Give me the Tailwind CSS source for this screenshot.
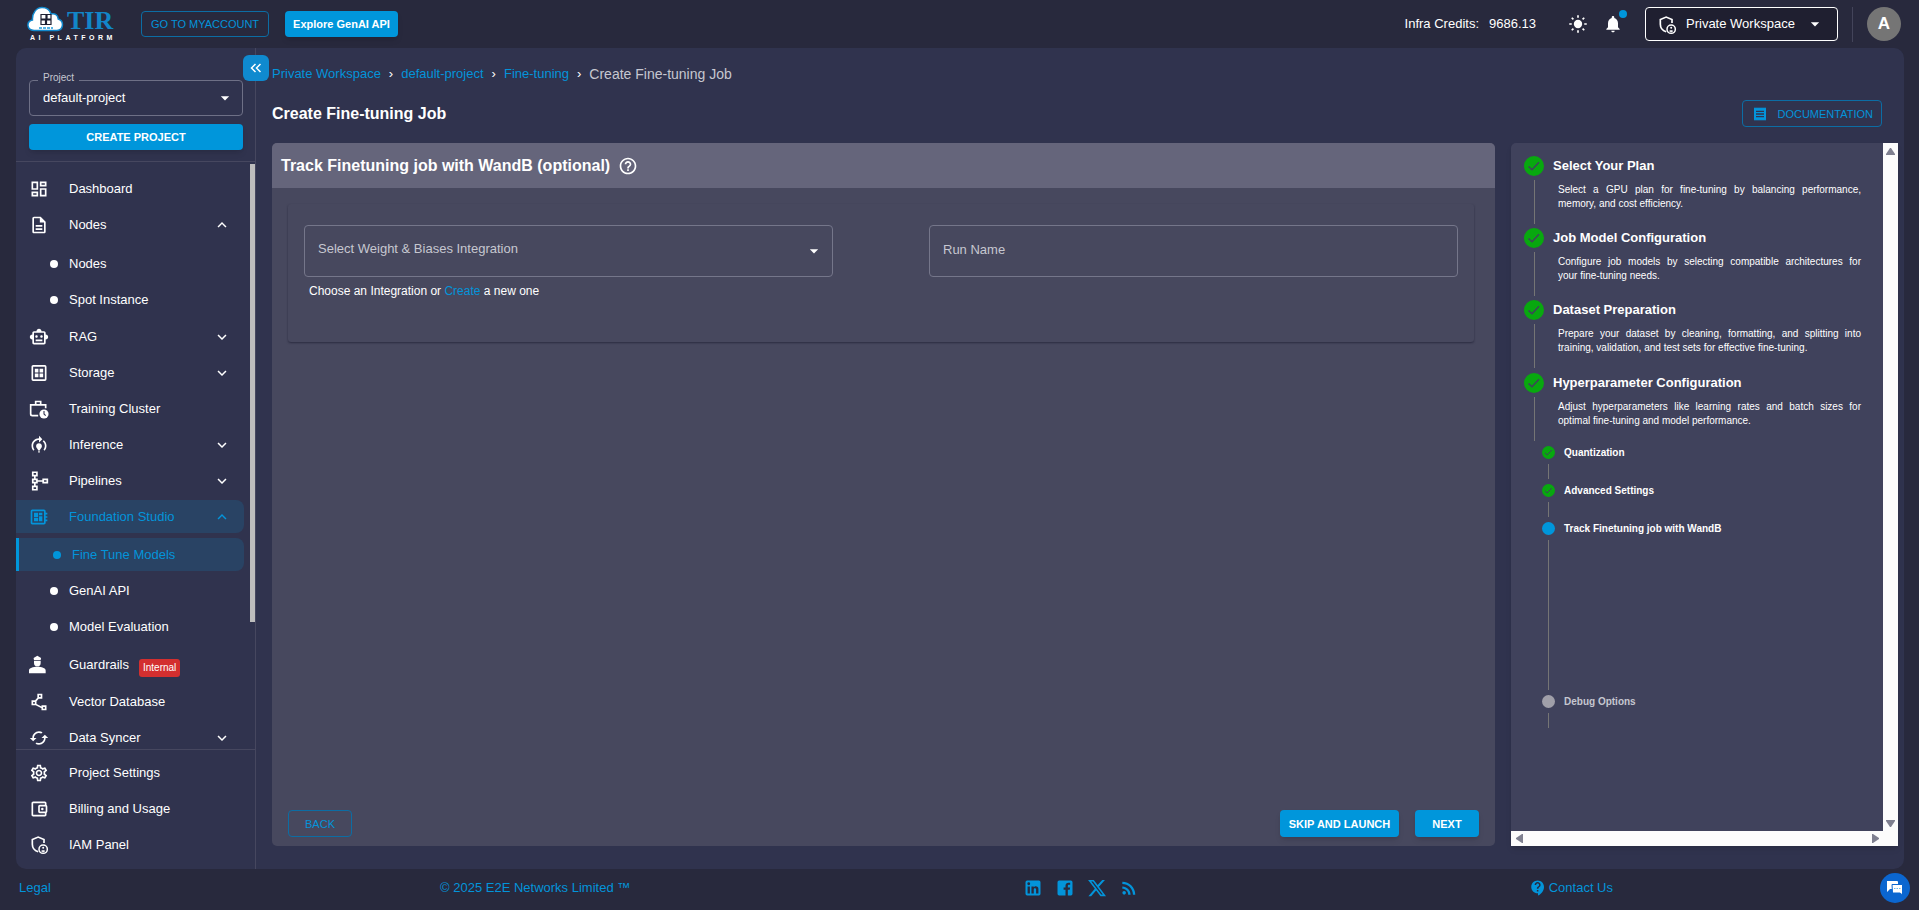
<!DOCTYPE html>
<html lang="en">
<head>
    <meta charset="UTF-8">
    <meta name="viewport" content="width=device-width, initial-scale=1.0">
    <title>TIR AI Platform - Create Fine-tuning Job</title>
    <script src="https://cdn.jsdelivr.net/npm/@tailwindcss/browser@4"></script>
</head>
<body class="h-screen flex flex-col overflow-hidden bg-[#28293d] text-white text-[13px] leading-5 font-['Liberation_Sans',Arial,sans-serif]">

    <!-- Icon set -->
    <svg class="hidden">
        <symbol id="dashboard" viewBox="0 0 24 24"><path d="M19 5v2h-4V5h4M9 5v6H5V5h4m10 8v6h-4v-6h4M9 17v2H5v-2h4M21 3h-8v6h8V3zM11 3H3v10h8V3zm10 8h-8v10h8V11zm-10 4H3v6h8v-6z"/></symbol>
        <symbol id="file" viewBox="0 0 24 24"><path d="M8 16h8v2H8zm0-4h8v2H8zm6-10H6c-1.1 0-2 .9-2 2v16c0 1.1.89 2 1.99 2H18c1.1 0 2-.9 2-2V8l-6-6zm4 18H6V4h7v5h5v11z"/></symbol>
        <symbol id="robot" viewBox="0 0 24 24"><path d="M20 9V7c0-1.1-.9-2-2-2h-3c0-1.66-1.34-3-3-3S9 3.34 9 5H6c-1.1 0-2 .9-2 2v2c-1.66 0-3 1.34-3 3s1.34 3 3 3v4c0 1.1.9 2 2 2h12c1.1 0 2-.9 2-2v-4c1.66 0 3-1.34 3-3s-1.34-3-3-3zm-2 10H6V7h12v12zm-9-6c-.83 0-1.5-.67-1.5-1.5S8.17 10 9 10s1.5.67 1.5 1.5S9.83 13 9 13zm7.500-1.500c0 .83-.67 1.500-1.500 1.500s-1.500-.67-1.500-1.500.67-1.500 1.500-1.500 1.500.67 1.500 1.500zM8 15h8v2H8v-2z"/></symbol>
        <symbol id="storage" viewBox="0 0 24 24"><path fill-rule="evenodd" d="M5 2.500h14a2 2 0 0 1 2 2v15a2 2 0 0 1-2 2H5a2 2 0 0 1-2-2v-15c0-1.100.9-2 2-2zm0 2v15h14v-15H5z"/><path d="M7 7h4.300v4.300H7zM12.700 7H17v4.300h-4.300zM7 12.700h4.300V17H7zM12.700 12.700H17V17h-4.300z"/></symbol>
        <symbol id="work" viewBox="0 0 24 24"><path fill="none" stroke="currentColor" stroke-width="2" d="M11 20H4a2 2 0 0 1-2-2V7h18v4M8 7V3h6v4"/><circle cx="18" cy="18" r="5.500"/><path fill="none" stroke="#30334e" stroke-width="1.300" d="M18 14.500V18l2 2"/></symbol>
        <symbol id="model" viewBox="0 0 24 24"><path d="M15.500 13.500c0 2-2.500 3.500-2.500 5h-2c0-1.500-2.500-3-2.500-5 0-1.930 1.570-3.500 3.500-3.500s3.500 1.570 3.500 3.500zm-2.500 6h-2V21h2v-1.500zm6-6.500c0 1.680-.59 3.210-1.580 4.420l1.420 1.420C20.180 17.270 21 15.230 21 13c0-2.740-1.230-5.190-3.160-6.840l-1.420 1.420C17.990 8.860 19 10.820 19 13zm-3-8-4-4v3c-4.970 0-9 4.030-9 9 0 2.230.82 4.270 2.160 5.840l1.420-1.420C5.590 16.210 5 14.680 5 13c0-3.860 3.140-7 7-7v3l4-4z"/></symbol>
        <symbol id="pipeline" viewBox="0 0 24 24"><path fill="none" stroke="currentColor" stroke-width="2" d="M4.500 1.500h5v4h-5zM4.500 10h5v4h-5zM4.500 18.500h5v4h-5zM17 10h5v4h-5zM7 5.500V10M7 14v4.500M9.500 12H17"/></symbol>
        <symbol id="board" viewBox="0 0 24 24"><path d="M22 9V7h-2V5c0-1.100-.9-2-2-2H4c-1.100 0-2 .9-2 2v14c0 1.100.9 2 2 2h14c1.100 0 2-.9 2-2v-2h2v-2h-2v-2h2v-2h-2V9h2zm-4 10H4V5h14v14zM6 13h5v4H6zm6-6h4v3h-4zM6 7h5v5H6zm6 4h4v6h-4z"/></symbol>
        <symbol id="guard" viewBox="0 0 24 24"><path d="M5.500 3.500 10 1l4.500 2.500L14 6H6zM6 7h8v2.500a4 4 0 0 1-8 0zM0 22v-3.500C0 15.500 5 14 10 14s10 1.500 10 4.500V22z"/></symbol>
        <symbol id="polyline" viewBox="0 0 24 24"><path d="M15 16v1.260l-6-3v-3.170L11.700 8H16V2h-6v4.900L7.300 10H3v6h5l7 3.500V22h6v-6h-6zM12 4h2v2h-2V4zM7 14H5v-2h2v2zm12 6h-2v-2h2v2z"/></symbol>
        <symbol id="sync" viewBox="0 0 24 24"><path d="M19 8l-4 4h3c0 3.310-2.690 6-6 6-1.010 0-1.970-.25-2.800-.7l-1.460 1.460C8.970 19.540 10.430 20 12 20c4.420 0 8-3.580 8-8h3l-4-4zM6 12c0-3.310 2.690-6 6-6 1.010 0 1.970.25 2.800.7l1.460-1.460C15.030 4.460 13.570 4 12 4c-4.420 0-8 3.580-8 8H1l4 4 4-4H6z"/></symbol>
        <symbol id="gear" viewBox="0 0 24 24"><path d="M19.430 12.980c.04-.32.07-.64.07-.98 0-.34-.03-.66-.07-.98l2.110-1.650c.19-.15.24-.42.12-.64l-2-3.460c-.09-.16-.26-.25-.44-.25-.06 0-.12.01-.17.03l-2.490 1c-.52-.4-1.080-.73-1.690-.98l-.38-2.650C14.460 2.180 14.250 2 14 2h-4c-.25 0-.46.18-.49.42l-.38 2.650c-.61.25-1.170.59-1.690.98l-2.490-1c-.06-.02-.12-.03-.18-.03-.17 0-.34.09-.43.25l-2 3.460c-.13.22-.07.49.12.64l2.110 1.650c-.04.32-.07.65-.07.98 0 .33.03.66.07.98l-2.110 1.650c-.19.15-.24.42-.12.64l2 3.460c.09.16.26.25.44.25.06 0 .12-.01.17-.03l2.490-1c.52.4 1.080.73 1.690.98l.38 2.650c.03.24.24.42.49.42h4c.25 0 .46-.18.49-.42l.38-2.650c.61-.25 1.170-.59 1.690-.98l2.490 1c.06.02.12.03.18.03.17 0 .34-.09.43-.25l2-3.460c.12-.22.07-.49-.12-.64l-2.110-1.650zm-1.980-1.710c.04.31.05.52.05.73 0 .21-.02.43-.05.73l-.14 1.130.89.7 1.080.84-.7 1.210-1.270-.51-1.040-.42-.9.68c-.43.32-.84.56-1.250.73l-1.060.43-.16 1.130-.2 1.350h-1.400l-.19-1.350-.16-1.130-1.060-.43c-.43-.18-.83-.41-1.230-.71l-.91-.7-1.060.43-1.270.51-.7-1.210 1.080-.84.89-.7-.14-1.130c-.03-.31-.05-.54-.05-.74s.02-.43.05-.73l.14-1.130-.89-.7-1.080-.84.7-1.210 1.270.51 1.040.42.9-.68c.43-.32.84-.56 1.250-.73l1.060-.43.16-1.130.2-1.350h1.390l.19 1.350.16 1.130 1.060.43c.43.18.83.41 1.230.71l.91.7 1.060-.43 1.270-.51.7 1.210-1.070.85-.89.7.14 1.130zM12 8c-2.210 0-4 1.790-4 4s1.790 4 4 4 4-1.790 4-4-1.790-4-4-4zm0 6c-1.100 0-2-.9-2-2s.9-2 2-2 2 .9 2 2-.9 2-2 2z"/></symbol>
        <symbol id="wallet" viewBox="0 0 24 24"><path d="M21 7.280V5c0-1.100-.9-2-2-2H5c-1.110 0-2 .9-2 2v14c0 1.100.89 2 2 2h14c1.100 0 2-.9 2-2v-2.280c.59-.35 1-.98 1-1.720V9c0-.74-.41-1.370-1-1.720zM20 9v6h-7V9h7zM5 19V5h14v2h-6c-1.100 0-2 .9-2 2v6c0 1.100.9 2 2 2h6v2H5z"/><circle cx="16" cy="12" r="1.500"/></symbol>
        <symbol id="shield" viewBox="0 0 24 24"><path fill="none" stroke="currentColor" stroke-width="2" d="M18 9.500V5.500L11 2.500 4 5.500V11c0 4 2.500 7.500 7 9"/><circle cx="17" cy="17" r="5" fill="none" stroke="currentColor" stroke-width="1.800"/><circle cx="17" cy="15.300" r="1.200"/><path d="M14.500 19.300c.5-1.400 4.500-1.400 5 0-1 1.500-4 1.500-5 0z"/></symbol>
        <symbol id="down" viewBox="0 0 24 24"><path d="M16.590 8.590 12 13.170 7.410 8.590 6 10l6 6 6-6z"/></symbol>
        <symbol id="up" viewBox="0 0 24 24"><path d="m12 8-6 6 1.410 1.410L12 10.830l4.590 4.580L18 14z"/></symbol>
        <symbol id="caret" viewBox="0 0 24 24"><path d="m7 10 5 5 5-5z"/></symbol>
        <symbol id="check" viewBox="0 0 20 20"><circle cx="10" cy="10" r="10" fill="#08a80f"/><path fill="none" stroke="#40425c" stroke-width="1.500" d="m4.500 10.500 3.500 3.200 7-7.400"/></symbol>
    </svg>

    <!-- Header -->
    <header class="h-12 shrink-0 flex items-center justify-between pl-[27px] pr-[18px]">
        <div class="flex items-center">
            <a href="#" aria-label="TIR AI Platform" class="mr-6">
                <svg class="w-[90px] h-9 block" viewBox="0 0 90 36">
                    <path fill="#fff" stroke="#1288cc" stroke-width="1.500" d="M7 24.500c-7.500-.5-8-9-1.500-10.500C5 7 9.500 1.500 15 1.500c5 0 8 3 9 6.500 4-1 7 1 7.200 5 6.300 2 5.300 11-1.200 11.500z"/>
                    <path fill="none" stroke="#1e2133" stroke-width="1.200" d="M14 8.500h5v4.500h-5zm6 0h4v4.500h-4zM14 14h4.500v4.500H14zm5.500 0H24v4.500h-4.500z"/>
                    <path stroke="#58b4e4" stroke-width="2" stroke-dasharray="3 1" d="M12 22h14"/>
                    <text x="40" y="23" font-size="26" font-weight="700" fill="#1286c8" font-family="Liberation Serif, serif">TIR</text>
                    <text x="3" y="34" font-size="7" font-weight="700" fill="#fff" letter-spacing="3.500" font-family="Liberation Sans, sans-serif">AI PLATFORM</text>
                </svg>
            </a>
            <button class="h-[26px] px-2 rounded border border-[#0c6da4] text-[#0394da] text-[11px] w-32 whitespace-nowrap">GO TO MYACCOUNT</button>
            <button class="h-[26px] w-[113px] ml-4 rounded bg-[#0096db] text-[11px] font-bold whitespace-nowrap shadow-md">Explore GenAI API</button>
        </div>
        <div class="flex items-center">
            <span>Infra Credits:</span>
            <span class="ml-[10px]">9686.13</span>
            <button aria-label="Toggle theme" class="ml-8">
                <svg class="size-5 block" viewBox="0 0 24 24" fill="currentColor"><circle cx="12" cy="12" r="5"/><path stroke="currentColor" stroke-width="2" d="M12 1.500v3M12 19.500v3M1.500 12h3M19.500 12h3M4.500 4.500l2 2M17.500 17.500l2 2M4.500 19.500l2-2M17.500 6.500l2-2"/></svg>
            </button>
            <button aria-label="Notifications" class="relative ml-[15px]">
                <svg class="size-5 block" viewBox="0 0 24 24" fill="currentColor"><path d="M12 22c1.100 0 2-.9 2-2h-4c0 1.100.89 2 2 2zm6-6v-5c0-3.070-1.640-5.640-4.500-6.320V4c0-.83-.67-1.500-1.500-1.500s-1.500.67-1.500 1.500v.68C7.630 5.360 6 7.920 6 11v5l-2 2v1h16v-1l-2-2z"/></svg>
                <span class="absolute -top-1 left-4 size-2 rounded-full bg-[#0096db]"></span>
            </button>
            <div class="relative ml-[22px]">
                <svg class="absolute left-3 top-2 size-5 pointer-events-none" fill="currentColor"><use href="#shield"/></svg>
                <select aria-label="Workspace" class="appearance-none w-[193px] h-[34px] pl-10 rounded border border-white bg-[#1f1f30]">
                    <option>Private Workspace</option>
                </select>
                <svg class="absolute right-[13px] top-[7px] size-5 pointer-events-none" fill="currentColor"><use href="#caret"/></svg>
            </div>
            <div class="w-px h-[35px] ml-[14px] bg-[#43445a]"></div>
            <button aria-label="Account" class="ml-[14px] size-[34px] rounded-full bg-[#757575] text-[17px] font-bold">A</button>
        </div>
    </header>

    <!-- Shell -->
    <div class="flex-1 min-h-0 ml-4 mr-[15px] flex rounded-[10px] bg-[#30334e]">

        <!-- Sidebar -->
        <aside class="relative w-60 shrink-0 flex flex-col border-r border-[#46475f]">
            <button aria-label="Collapse sidebar" class="absolute top-[7px] -right-[14px] size-[26px] rounded-md bg-[#0f8acf] flex items-center justify-center">
                <svg class="w-3 h-3" viewBox="0 0 12 12" fill="none" stroke="currentColor" stroke-width="1.500"><path d="M5.500 2 1.500 6l4 4M10.500 2l-4 4 4 4"/></svg>
            </button>
            <div class="pt-8 pb-[11px] pl-[13px] pr-3 border-b border-[#46475f]">
                <div class="relative">
                    <label for="project" class="absolute left-[9px] -top-2 px-[5px] text-[10px] leading-3 bg-[#30334e] text-[#c6c7d0]">Project</label>
                    <select id="project" class="appearance-none w-full h-9 pl-[13px] rounded border border-[#6e7086]">
                        <option>default-project</option>
                    </select>
                    <svg class="absolute right-2 top-2 size-5 pointer-events-none" fill="currentColor"><use href="#caret"/></svg>
                </div>
                <button class="mt-2 w-full h-[26px] rounded bg-[#0096db] text-[11px] font-bold shadow-md">CREATE PROJECT</button>
            </div>

            <div class="flex-1 min-h-0 flex overflow-hidden">
                <nav class="flex-1 pt-[10px] pr-[6px] flex flex-col gap-[3px] shrink-0">
                    <a href="#" class="flex items-center h-[33px] shrink-0 pl-[13px] pr-[13px]"><svg class="size-5" fill="currentColor"><use href="#dashboard"/></svg><span class="ml-5">Dashboard</span></a>
                    <a href="#" class="flex items-center h-[33px] shrink-0 pl-[13px] pr-[13px]"><svg class="size-5" fill="currentColor"><use href="#file"/></svg><span class="ml-5 flex-1">Nodes</span><svg class="size-[18px]" fill="currentColor"><use href="#up"/></svg></a>
                    <div class="pt-[3px] pb-px flex flex-col gap-[3px]">
                        <a href="#" class="flex items-center h-[33px] pl-[34px]"><span class="size-2 rounded-full bg-white"></span><span class="ml-[11px]">Nodes</span></a>
                        <a href="#" class="flex items-center h-[33px] pl-[34px]"><span class="size-2 rounded-full bg-white"></span><span class="ml-[11px]">Spot Instance</span></a>
                    </div>
                    <a href="#" class="flex items-center h-[33px] shrink-0 pl-[13px] pr-[13px]"><svg class="size-5" fill="currentColor"><use href="#robot"/></svg><span class="ml-5 flex-1">RAG</span><svg class="size-[18px]" fill="currentColor"><use href="#down"/></svg></a>
                    <a href="#" class="flex items-center h-[33px] shrink-0 pl-[13px] pr-[13px]"><svg class="size-5" fill="currentColor"><use href="#storage"/></svg><span class="ml-5 flex-1">Storage</span><svg class="size-[18px]" fill="currentColor"><use href="#down"/></svg></a>
                    <a href="#" class="flex items-center h-[33px] shrink-0 pl-[13px] pr-[13px]"><svg class="size-5" fill="currentColor"><use href="#work"/></svg><span class="ml-5">Training Cluster</span></a>
                    <a href="#" class="flex items-center h-[33px] shrink-0 pl-[13px] pr-[13px]"><svg class="size-5" fill="currentColor"><use href="#model"/></svg><span class="ml-5 flex-1">Inference</span><svg class="size-[18px]" fill="currentColor"><use href="#down"/></svg></a>
                    <a href="#" class="flex items-center h-[33px] shrink-0 pl-[13px] pr-[13px]"><svg class="size-5" fill="currentColor"><use href="#pipeline"/></svg><span class="ml-5 flex-1">Pipelines</span><svg class="size-[18px]" fill="currentColor"><use href="#down"/></svg></a>
                    <a href="#" class="flex items-center h-[33px] shrink-0 pl-[13px] pr-[13px] rounded-r-lg bg-[#294364] text-[#0394da]"><svg class="size-5" fill="currentColor"><use href="#board"/></svg><span class="ml-5 flex-1">Foundation Studio</span><svg class="size-[18px]" fill="currentColor"><use href="#up"/></svg></a>
                    <div class="pt-[2px] pb-[2px] flex flex-col gap-[3px]">
                        <a href="#" class="flex items-center h-[33px] pl-[34px] border-l-3 border-[#0096db] rounded-r-lg bg-[#294364] text-[#0394da]"><span class="size-2 rounded-full bg-[#0096db]"></span><span class="ml-[11px]">Fine Tune Models</span></a>
                        <a href="#" class="flex items-center h-[33px] pl-[34px]"><span class="size-2 rounded-full bg-white"></span><span class="ml-[11px]">GenAI API</span></a>
                        <a href="#" class="flex items-center h-[33px] pl-[34px]"><span class="size-2 rounded-full bg-white"></span><span class="ml-[11px]">Model Evaluation</span></a>
                    </div>
                    <a href="#" class="flex items-center h-[34px] shrink-0 pl-[13px] pr-[13px]"><svg class="size-5" fill="currentColor"><use href="#guard"/></svg><span class="ml-5">Guardrails</span><span class="ml-[10px] mt-[6px] px-1 h-[18px] leading-[18px] rounded-[3px] bg-[#d32f2f] text-[10px]">Internal</span></a>
                    <a href="#" class="flex items-center h-[33px] shrink-0 pl-[13px] pr-[13px]"><svg class="size-5" fill="currentColor"><use href="#polyline"/></svg><span class="ml-5">Vector Database</span></a>
                    <a href="#" class="flex items-center h-[33px] shrink-0 pl-[13px] pr-[13px]"><svg class="size-5" fill="currentColor"><use href="#sync"/></svg><span class="ml-5 flex-1">Data Syncer</span><svg class="size-[18px]" fill="currentColor"><use href="#down"/></svg></a>
                </nav>
                <!-- Scrollbar thumb -->
                <div class="w-[6px] -mr-px mt-[2px] h-[78%] bg-[#bdbdbd]"></div>
            </div>

            <nav class="h-[120px] shrink-0 pt-[6px] flex flex-col gap-[3px] border-t border-[#46475f]">
                <a href="#" class="flex items-center h-[33px] pl-[13px]"><svg class="size-5" fill="currentColor"><use href="#gear"/></svg><span class="ml-5">Project Settings</span></a>
                <a href="#" class="flex items-center h-[33px] pl-[13px]"><svg class="size-5" fill="currentColor"><use href="#wallet"/></svg><span class="ml-5">Billing and Usage</span></a>
                <a href="#" class="flex items-center h-[33px] pl-[13px]"><svg class="size-5" fill="currentColor"><use href="#shield"/></svg><span class="ml-5">IAM Panel</span></a>
            </nav>
        </aside>

        <!-- Content -->
        <main class="flex-1 min-w-0 flex flex-col pt-4 pb-[23px] pl-4 pr-[6px]">
            <nav aria-label="Breadcrumb" class="flex gap-2 text-[#0394da]">
                <a href="#">Private Workspace</a>
                <span class="text-white">›</span>
                <a href="#">default-project</a>
                <span class="text-white">›</span>
                <a href="#">Fine-tuning</a>
                <span class="text-white">›</span>
                <span class="text-sm text-[#c6c7d0]">Create Fine-tuning Job</span>
            </nav>
            <div class="mt-4 mb-4 pr-4 flex items-center justify-between">
                <h1 class="text-base font-bold">Create Fine-tuning Job</h1>
                <a href="#" class="flex items-center h-[27px] px-2 rounded border border-[#0c6da4] text-[#0394da] text-[11px]">
                    <svg class="w-[18px] h-4 mr-2" viewBox="0 0 24 24" fill="currentColor"><path d="M18 17H6v-2h12v2zm0-4H6v-2h12v2zm0-4H6V7h12v2zM3 22l1.500-1.500L6 22l1.500-1.500L9 22l1.500-1.500L12 22l1.500-1.500L15 22l1.500-1.500L18 22l1.500-1.500L21 22V2l-1.500 1.500L18 2l-1.500 1.500L15 2l-1.500 1.500L12 2l-1.500 1.500L9 2 7.500 3.500 6 2 4.500 3.500 3 2v20z"/></svg>
                    DOCUMENTATION
                </a>
            </div>

            <div class="flex-1 min-h-0 flex gap-4">
                <section class="flex-1 min-w-0 flex flex-col rounded-[5px] bg-[#47485e] overflow-hidden">
                    <div class="h-[45px] shrink-0 flex items-center pl-[9px] bg-[#65657b]">
                        <h2 class="text-base font-bold">Track Finetuning job with WandB (optional)</h2>
                        <svg class="ml-2 size-5" viewBox="0 0 24 24" fill="currentColor"><path d="M11 18h2v-2h-2v2zm1-16C6.480 2 2 6.480 2 12s4.480 10 10 10 10-4.480 10-10S17.520 2 12 2zm0 18c-4.410 0-8-3.590-8-8s3.590-8 8-8 8 3.590 8 8-3.590 8-8 8zm0-14c-2.210 0-4 1.790-4 4h2c0-1.100.9-2 2-2s2 .9 2 2c0 2-3 1.750-3 5h2c0-2.250 3-2.500 3-5 0-2.210-1.790-4-4-4z"/></svg>
                    </div>
                    <form class="flex-1 flex flex-col justify-between pt-4 pb-[9px] px-4">
                        <div class="mr-[5px] h-[138px] px-4 pt-[21px] grid grid-cols-2 gap-24 rounded-[3px] shadow-[0_1px_2px_rgba(20,20,40,0.55)]">
                            <div>
                                <div class="relative">
                                    <select aria-label="Select Weight &amp; Biases Integration" class="appearance-none w-full h-[52px] pl-[13px] pb-1 rounded border border-[#75768a] text-[#c6c7d0]">
                                        <option>Select Weight &amp; Biases Integration</option>
                                    </select>
                                    <svg class="absolute right-[9px] top-4 size-5 pointer-events-none" fill="currentColor"><use href="#caret"/></svg>
                                </div>
                                <p class="mt-1 ml-[5px] text-xs leading-5">Choose an Integration or <a href="#" class="text-[#0394da]">Create</a> a new one</p>
                            </div>
                            <input type="text" aria-label="Run Name" placeholder="Run Name" class="h-[52px] px-[13px] pb-1 rounded border border-[#75768a] placeholder:text-[#c6c7d0]">
                        </div>
                        <div class="flex items-center">
                            <button type="button" class="w-16 h-[27px] rounded border border-[#0c6da4] text-[#0394da] text-[11px]">BACK</button>
                            <button type="button" class="ml-auto w-[119px] h-[27px] rounded bg-[#0096db] text-[11px] font-bold shadow-md">SKIP AND LAUNCH</button>
                            <button type="button" class="ml-4 w-16 h-[27px] rounded bg-[#0096db] text-[11px] font-bold shadow-md">NEXT</button>
                        </div>
                    </form>
                </section>

                <!-- Stepper -->
                <section class="w-[387px] shrink-0 grid grid-cols-[1fr_15px] grid-rows-[1fr_15px] rounded-tl-[5px] bg-[#40425c] shadow-md">
                    <ol class="pt-[13px] pl-[13px] pr-[22px] min-h-0 overflow-hidden">
                        <li class="flex h-[72px]">
                            <div class="w-5 shrink-0 flex flex-col items-center"><svg class="size-5"><use href="#check"/></svg><span class="mt-1 w-px h-11 bg-[#757575]"></span></div>
                            <div class="flex-1 ml-[9px]">
                                <h3 class="font-bold">Select Your Plan</h3>
                                <p class="mt-[7px] ml-[5px] text-[10px] leading-[14px] text-justify">Select a GPU plan for fine-tuning by balancing performance, memory, and cost efficiency.</p>
                            </div>
                        </li>
                        <li class="flex h-[72px]">
                            <div class="w-5 shrink-0 flex flex-col items-center"><svg class="size-5"><use href="#check"/></svg><span class="mt-1 w-px h-11 bg-[#757575]"></span></div>
                            <div class="flex-1 ml-[9px]">
                                <h3 class="font-bold">Job Model Configuration</h3>
                                <p class="mt-[7px] ml-[5px] text-[10px] leading-[14px] text-justify">Configure job models by selecting compatible architectures for your&nbsp;fine-tuning needs.</p>
                            </div>
                        </li>
                        <li class="flex h-[73px]">
                            <div class="w-5 shrink-0 flex flex-col items-center"><svg class="size-5"><use href="#check"/></svg><span class="mt-1 w-px h-11 bg-[#757575]"></span></div>
                            <div class="flex-1 ml-[9px]">
                                <h3 class="font-bold">Dataset Preparation</h3>
                                <p class="mt-[7px] ml-[5px] text-[10px] leading-[14px] text-justify">Prepare your dataset by cleaning, formatting, and splitting into training, validation, and test sets for effective fine-tuning.</p>
                            </div>
                        </li>
                        <li class="flex h-[73px]">
                            <div class="w-5 shrink-0 flex flex-col items-center"><svg class="size-5"><use href="#check"/></svg><span class="mt-1 w-px h-11 bg-[#757575]"></span></div>
                            <div class="flex-1 ml-[9px]">
                                <h3 class="font-bold">Hyperparameter Configuration</h3>
                                <p class="mt-[7px] ml-[5px] text-[10px] leading-[14px] text-justify">Adjust hyperparameters like learning rates and batch sizes for optimal fine-tuning and model performance.</p>
                            </div>
                        </li>
                        <li>
                            <ol class="ml-[18px] text-[10px] leading-[13px] font-bold">
                                <li class="flex h-[38px]">
                                    <div class="w-[13px] flex flex-col items-center"><svg class="size-[13px]"><use href="#check"/></svg><span class="mt-[5px] w-px h-[15px] bg-[#757575]"></span></div>
                                    <span class="ml-[9px]">Quantization</span>
                                </li>
                                <li class="flex h-[38px]">
                                    <div class="w-[13px] flex flex-col items-center"><svg class="size-[13px]"><use href="#check"/></svg><span class="mt-[5px] w-px h-[15px] bg-[#757575]"></span></div>
                                    <span class="ml-[9px]">Advanced Settings</span>
                                </li>
                                <li class="flex h-[173px]">
                                    <div class="w-[13px] flex flex-col items-center"><span class="size-[13px] rounded-full bg-[#0096db]"></span><span class="mt-[5px] w-px h-[150px] bg-[#757575]"></span></div>
                                    <span class="ml-[9px]">Track Finetuning job with WandB</span>
                                </li>
                                <li class="flex h-[38px] text-[#c6c7d0]">
                                    <div class="w-[13px] flex flex-col items-center"><span class="size-[13px] rounded-full bg-[#a09fa9]"></span><span class="mt-[5px] w-px h-[15px] bg-[#757575]"></span></div>
                                    <span class="ml-[9px]">Debug Options</span>
                                </li>
                            </ol>
                        </li>
                    </ol>
                    <!-- Scrollbars -->
                    <div class="row-span-2 bg-[#fcfcfc] flex flex-col items-center justify-between pt-[5px] pb-[19px]">
                        <svg class="w-[9px] h-[7px]" viewBox="0 0 9 7" fill="#7f8090"><path d="M4 0h1l4 6v1H0V6z"/></svg>
                        <svg class="w-[9px] h-[7px]" viewBox="0 0 9 7" fill="#7f8090"><path d="M4 7h1l4-6V0H0v1z"/></svg>
                    </div>
                    <div class="bg-[#fcfcfc] flex items-center justify-between pl-[5px] pr-1">
                        <svg class="w-[7px] h-[9px]" viewBox="0 0 7 9" fill="#7f8090"><path d="M0 4v1l6 4h1V0H6z"/></svg>
                        <svg class="w-[7px] h-[9px]" viewBox="0 0 7 9" fill="#7f8090"><path d="M7 4v1L1 9H0V0h1z"/></svg>
                    </div>
                </section>
            </div>
        </main>
    </div>

    <!-- Footer -->
    <footer class="relative h-[41px] shrink-0 flex items-center justify-between pl-[19px] pr-[306px] pb-1 text-[#0394da]">
        <a href="#">Legal</a>
        <a href="#">© 2025 E2E Networks Limited ™</a>
        <div class="flex items-center gap-3 pl-1">
            <a href="#" aria-label="LinkedIn"><svg class="size-5 block" viewBox="0 0 24 24" fill="currentColor"><path d="M19 3a2 2 0 0 1 2 2v14a2 2 0 0 1-2 2H5a2 2 0 0 1-2-2V5a2 2 0 0 1 2-2h14m-.5 15.500v-5.300a3.260 3.260 0 0 0-3.260-3.260c-.85 0-1.840.52-2.320 1.300v-1.110h-2.790v8.370h2.790v-4.930c0-.77.62-1.400 1.390-1.400a1.400 1.400 0 0 1 1.400 1.400v4.930h2.790M6.880 8.560a1.680 1.680 0 0 0 1.680-1.680c0-.93-.75-1.690-1.680-1.690a1.690 1.690 0 0 0-1.690 1.690c0 .93.76 1.680 1.690 1.680m1.390 9.940v-8.370H5.500v8.370h2.770z"/></svg></a>
            <a href="#" aria-label="Facebook"><svg class="size-5 block" viewBox="0 0 24 24" fill="currentColor"><path d="M19 3H5a2 2 0 0 0-2 2v14a2 2 0 0 0 2 2h7.600v-7h-2.300v-2.700h2.300V9.300c0-2.300 1.400-3.600 3.500-3.600 1 0 1.900.1 2.100.1v2.400h-1.400c-1.100 0-1.400.5-1.400 1.300v1.800h2.700l-.4 2.700h-2.300v7H19a2 2 0 0 0 2-2V5a2 2 0 0 0-2-2z"/></svg></a>
            <a href="#" aria-label="X"><svg class="size-5 block" viewBox="0 0 24 24" fill="currentColor"><path d="M18.244 2.250h3.308l-7.227 8.260 8.502 11.240H16.170l-5.214-6.817L4.990 21.750H1.680l7.730-8.835L1.254 2.250H8.080l4.713 6.231zm-1.161 17.520h1.833L7.084 4.126H5.117z"/></svg></a>
            <a href="#" aria-label="RSS"><svg class="size-5 block" viewBox="0 0 24 24" fill="currentColor"><circle cx="6.180" cy="17.820" r="2.180"/><path d="M4 4.440v2.830c7.030 0 12.730 5.700 12.730 12.730h2.830c0-8.590-6.970-15.560-15.560-15.560zm0 5.660v2.830c3.900 0 7.070 3.170 7.070 7.070h2.830c0-5.470-4.430-9.900-9.900-9.900z"/></svg></a>
        </div>
        <a href="#" class="flex items-center gap-[2px]">
            <svg class="size-[18px]" viewBox="0 0 24 24" fill="currentColor"><path d="M11.500 2C6.810 2 3 5.810 3 10.500S6.810 19 11.500 19h.5v3c4.860-2.340 8-7 8-11.500C20 5.810 16.190 2 11.500 2zm1 14.500h-2v-2h2v2zm0-3.500h-2c0-3.250 3-3 3-5 0-1.100-.9-2-2-2s-2 .9-2 2h-2c0-2.210 1.790-4 4-4s4 1.790 4 4c0 2.500-3 2.750-3 5z"/></svg>
            Contact Us
        </a>
        <button aria-label="Open chat" class="absolute right-[9px] top-1 size-[30px] rounded-full bg-[#0b66d0] flex items-center justify-center">
            <svg class="w-[18px] h-4" viewBox="0 0 18 16"><path fill="#fff" d="M1 1h10a1 1 0 0 1 1 1v7H4l-3 3z"/><path fill="#fff" stroke="#0b66d0" d="M6 4.500h10.500V15l-2.500-2H6.500z"/><path stroke="#6fb6e6" stroke-dasharray="1.500 1" d="M8 8.500h6.500"/></svg>
        </button>
    </footer>

</body>
</html>
